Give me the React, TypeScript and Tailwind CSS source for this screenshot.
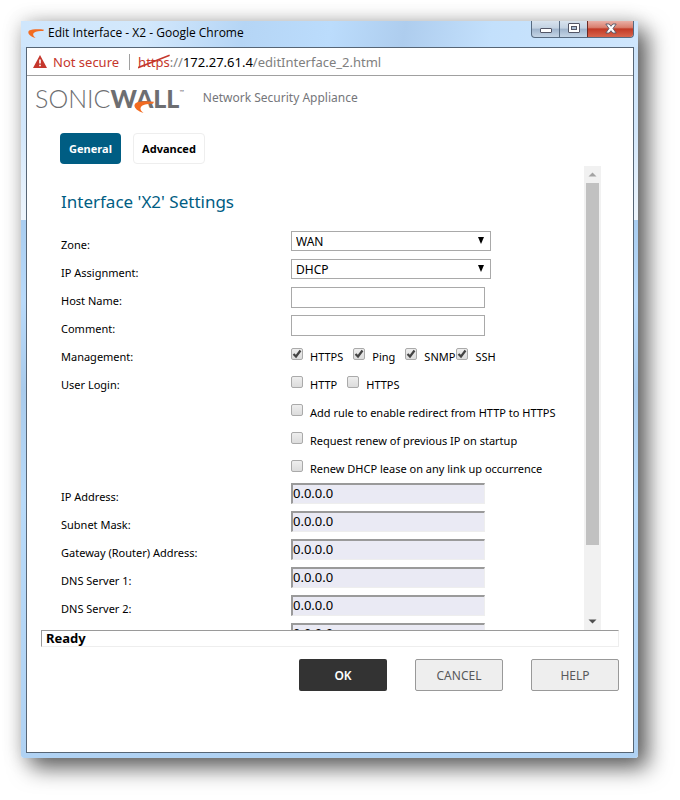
import { ReactNode, useState } from "react";

interface FieldRowProps {
  label?: string;
  htmlFor?: string;
  children: ReactNode;
}

interface CheckProps {
  id: string;
  label: string;
  checked?: boolean;
}

const addressFields = [
  { id: "ip-address", label: "IP Address:" },
  { id: "subnet-mask", label: "Subnet Mask:" },
  { id: "gateway", label: "Gateway (Router) Address:" },
  { id: "dns-1", label: "DNS Server 1:" },
  { id: "dns-2", label: "DNS Server 2:" },
  { id: "dns-3" }
];

const dhcpOptions = [
  { id: "redirect", label: "Add rule to enable redirect from HTTP to HTTPS" },
  { id: "renew-startup", label: "Request renew of previous IP on startup" },
  { id: "renew-linkup", label: "Renew DHCP lease on any link up occurrence" }
];

const Swoosh = ({ className }: { className: string }) => (
  <svg className={className} viewBox="0 0 20 14" preserveAspectRatio="none" fill="#f26b21" aria-hidden="true">
    <path d="M20 1C14 0 5 0 1.500 2.500 -1.500 6 2 11.500 9.500 14 6.500 11 5.500 8.500 7.500 6 10 3.500 15 3.300 19 3.200Z" />
  </svg>
);

const FieldRow = ({ label, htmlFor, children }: FieldRowProps) => (
  <div className="flex h-7">
    <div className="w-[230px] shrink-0 pt-2 leading-4">
      {label && (htmlFor ? <label htmlFor={htmlFor}>{label}</label> : <span>{label}</span>)}
    </div>
    <div className="flex min-w-0 items-start pt-0.5">{children}</div>
  </div>
);

const Check = ({ id, label, checked = false }: CheckProps) => {
  const [on, setOn] = useState(checked);

  return (
    <div className="flex items-start pt-[5px]">
      <span className="relative mr-[7px] block h-3 w-3 shrink-0">
        <input
          id={id}
          type="checkbox"
          checked={on}
          onChange={() => setOn(!on)}
          className="block h-3 w-3 appearance-none rounded-[2px] border border-[#aaaaaa] bg-gradient-to-b from-[#eeeeee] to-[#dcdcdc]"
        />
        {on && (
          <svg className="pointer-events-none absolute inset-0 h-3 w-3" viewBox="0 0 12 12" fill="none" stroke="#444" strokeWidth="2.200">
            <path d="M2.500 6 5 8.500 9.500 2.500" />
          </svg>
        )}
      </span>
      <label htmlFor={id} className="whitespace-nowrap pt-px leading-4">{label}</label>
    </div>
  );
};

const SelectBox = ({ id, options }: { id: string; options: string[] }) => (
  <div className="relative w-[200px]">
    <select
      id={id}
      className="block h-5 w-full appearance-none border border-[#a9a9a9] bg-white pl-1 pt-px text-[12px] leading-[18px]"
    >
      {options.map((option) => (
        <option key={option}>{option}</option>
      ))}
    </select>
    <svg className="pointer-events-none absolute right-1.5 top-1.5 h-[7px] w-2" viewBox="0 0 8 7" aria-hidden="true">
      <path d="M1 0H7L4 7Z" />
    </svg>
  </div>
);

const TitleBar = () => (
  <div className="flex h-[26px] items-start justify-between bg-[linear-gradient(100deg,#cfe6fc_0%,#d3e8fc_20%,#b5d5f5_36%,#bbdcfc_50%,#aecdee_62%,#c3e0fc_76%,#cfe6fc_100%)] pl-[5px] pr-1">
    <div className="flex items-center pl-0.5 pt-1">
      <Swoosh className="h-[9px] w-4" />
      <h1 className="ml-1 font-['Open_Sans',sans-serif] text-[12px] leading-4">Edit Interface - X2 - Google Chrome</h1>
    </div>
    <div className="flex h-[17px] w-[103px] overflow-hidden rounded-b border border-t-0 border-[#566a80] bg-[linear-gradient(to_bottom,#d8e3ee_0%,#c3d2e2_45%,#9fb4cc_50%,#c5d5e6_100%)]">
      <button type="button" aria-label="Minimize" className="flex w-7 items-center justify-center border-r border-[#566a80]">
        <svg className="h-3 w-3" viewBox="0 0 12 12" aria-hidden="true">
          <rect x=".5" y="5.500" width="11" height="4" rx=".5" fill="#fff" stroke="#535666" />
        </svg>
      </button>
      <button type="button" aria-label="Maximize" className="flex w-[27px] items-center justify-center">
        <svg className="h-3 w-3" viewBox="0 0 12 12" aria-hidden="true">
          <rect x=".5" y=".5" width="11" height="9" rx=".5" fill="#fff" stroke="#535666" />
          <rect x="3.500" y="3.500" width="5" height="3" fill="#a9bdd3" stroke="#535666" />
        </svg>
      </button>
      <button type="button" aria-label="Close" className="flex flex-1 items-center justify-center border-l border-[#6b2a24] bg-[linear-gradient(to_bottom,#e9b0a6_0%,#d9806f_40%,#c23a26_50%,#d8654c_100%)]">
        <svg className="h-3 w-3" viewBox="0 0 12 12" aria-hidden="true">
          <path d="M.8 1H4.200L6 3.300 7.800 1H11.200L8 5.500 11.200 10H7.800L6 7.700 4.200 10H.8L4 5.500Z" fill="#fff" stroke="#535666" strokeWidth=".9" />
        </svg>
      </button>
    </div>
  </div>
);

const AddressBar = () => (
  <div className="flex h-7 items-center border-b border-[#a0a0a0] pl-1.5 text-[13px] leading-4 text-[#808080]">
    <svg className="h-[13px] w-3.5" viewBox="0 0 14 13" aria-hidden="true">
      <path d="M7 0 14 13H0Z" fill="#c5372c" />
      <path d="M6.200 4.500H7.800V8.500H6.200ZM6.200 9.700H7.800V11.200H6.200Z" fill="#fff" />
    </svg>
    <span className="ml-1.5 text-[#c5372c]">Not secure</span>
    <span className="ml-2.5 h-4 border-l border-[#a0a0a0]" />
    <span className="ml-2 whitespace-nowrap">
      <span className="relative text-[#c5372c]">
        https
        <svg className="absolute inset-0 h-full w-full" viewBox="0 0 32 16" preserveAspectRatio="none" stroke="#c5372c" strokeWidth="1.500" aria-hidden="true">
          <path d="M0 13 32 2" />
        </svg>
      </span>
      ://<span className="text-black">172.27.61.4</span>/editInterface_2.html
    </span>
  </div>
);

const Logo = () => (
  <div className="relative flex font-[Lato,sans-serif] text-[25px] leading-5 text-[#6d6e71]">
    <span className="font-light">SONIC</span>
    <span className="font-black">WALL</span>
    <span className="text-[6px] leading-2">™</span>
    <Swoosh className="absolute left-[99px] top-[13px] h-3 w-5" />
  </div>
);

const ScrollBar = () => (
  <div className="flex w-[17px] shrink-0 flex-col items-center justify-between bg-[#f1f1f1]">
    <svg className="h-[17px] w-[17px]" viewBox="0 0 17 17" fill="#a3a3a3" aria-hidden="true">
      <path d="M4.500 10.500 8.500 6.500 12.500 10.500Z" />
    </svg>
    <div className="h-[362px] w-[13px] bg-[#c1c1c1]" />
    <div className="flex-1" />
    <svg className="h-[17px] w-[17px]" viewBox="0 0 17 17" fill="#505050" aria-hidden="true">
      <path d="M4.500 6.500H12.500L8.500 10.500Z" />
    </svg>
  </div>
);

const SettingsForm = () => (
  <div className="min-w-0 flex-1 pt-6 text-[11px]">
    <h2 className="mb-[15px] text-[17px] leading-6 text-[#005d83]">Interface 'X2' Settings</h2>
    <FieldRow label="Zone:" htmlFor="zone">
      <SelectBox id="zone" options={["WAN", "LAN", "DMZ"]} />
    </FieldRow>
    <FieldRow label="IP Assignment:" htmlFor="assignment">
      <SelectBox id="assignment" options={["DHCP", "Static"]} />
    </FieldRow>
    <FieldRow label="Host Name:" htmlFor="host-name">
      <input id="host-name" type="text" className="h-[21px] w-[194px] border border-[#a9a9a9] px-1 text-[12px]" />
    </FieldRow>
    <FieldRow label="Comment:" htmlFor="comment">
      <input id="comment" type="text" className="h-[21px] w-[194px] border border-[#a9a9a9] px-1 text-[12px]" />
    </FieldRow>
    <FieldRow label="Management:">
      <div className="flex gap-2.5">
        <Check id="m-https" label="HTTPS" checked />
        <Check id="m-ping" label="Ping" checked />
        <div className="flex gap-px">
          <Check id="m-snmp" label="SNMP" checked />
          <Check id="m-ssh" label="SSH" checked />
        </div>
      </div>
    </FieldRow>
    <FieldRow label="User Login:">
      <div className="flex gap-2.5">
        <Check id="l-http" label="HTTP" />
        <Check id="l-https" label="HTTPS" />
      </div>
    </FieldRow>
    {dhcpOptions.map((option) => (
      <FieldRow key={option.id}>
        <Check id={option.id} label={option.label} />
      </FieldRow>
    ))}
    {addressFields.map((field) => (
      <FieldRow key={field.id} label={field.label} htmlFor={field.id}>
        <input
          id={field.id}
          type="text"
          aria-label={field.label ? undefined : "DNS Server 3"}
          readOnly
          value="0.0.0.0"
          className="h-[21px] w-[194px] border-b border-l-2 border-r border-t-2 border-b-[#eeeeee] border-l-[#9a9a9a] border-r-[#eeeeee] border-t-[#9a9a9a] bg-[#eaeaf4] pb-0.5 text-[13px] leading-4"
        />
      </FieldRow>
    ))}
  </div>
);

const App = () => (
  <div className="bg-white pb-[42px] pl-[21px] pr-[42px] pt-[21px] font-['Noto_Sans',sans-serif] text-black">
    <div className="rounded-b-[3px] bg-[linear-gradient(to_bottom,#c9e2fa_0%,#d3e7fb_15%,#eef5fc_27%,#a9cdf0_27%,#b9dafa_38%,#a9cbec_50%,#b8daf9_65%,#b0d2f3_100%)] pb-[5px] shadow-[10px_10px_22px_rgba(0,0,0,0.6),0_0_20px_rgba(0,0,0,0.18)]">
      <TitleBar />
      <main className="ml-[5px] mr-1 border border-[#566575] bg-white pb-[61px]">
        <AddressBar />
        <header className="flex h-9 items-start pl-2 pt-3">
          <Logo />
          <p className="ml-[19px] pt-0.5 text-[12px] leading-4 text-[#75767a]">Network Security Appliance</p>
        </header>
        <nav className="mt-[21px] flex gap-3 pl-[33px] text-[11px] font-bold">
          <button type="button" className="h-[31px] w-[61px] rounded bg-[#005d83] pt-px text-white">General</button>
          <button type="button" className="h-[31px] w-[72px] rounded border border-[#eeeeee] bg-white pt-px">Advanced</button>
        </nav>
        <div className="mt-0.5 flex h-[464px] overflow-hidden pl-[34px] pr-8">
          <SettingsForm />
          <ScrollBar />
        </div>
        <div className="mx-3.5 h-[17px] border border-b-[#eeeeee] border-l-[#9a9a9a] border-r-[#eeeeee] border-t-[#9a9a9a] pl-1 text-[13px] font-bold leading-[14px]">
          Ready
        </div>
        <footer className="mr-3.5 mt-3 flex justify-end gap-7 text-[12px] text-[#58595b]">
          <button type="button" className="h-8 w-[88px] rounded-xs bg-[#333333] pt-px font-semibold text-white">OK</button>
          <button type="button" className="h-8 w-[88px] rounded-xs border border-[#999999] bg-[#eeeeee] pt-px">CANCEL</button>
          <button type="button" className="h-8 w-[88px] rounded-xs border border-[#999999] bg-[#eeeeee] pt-px">HELP</button>
        </footer>
      </main>
    </div>
  </div>
);

export default App;
